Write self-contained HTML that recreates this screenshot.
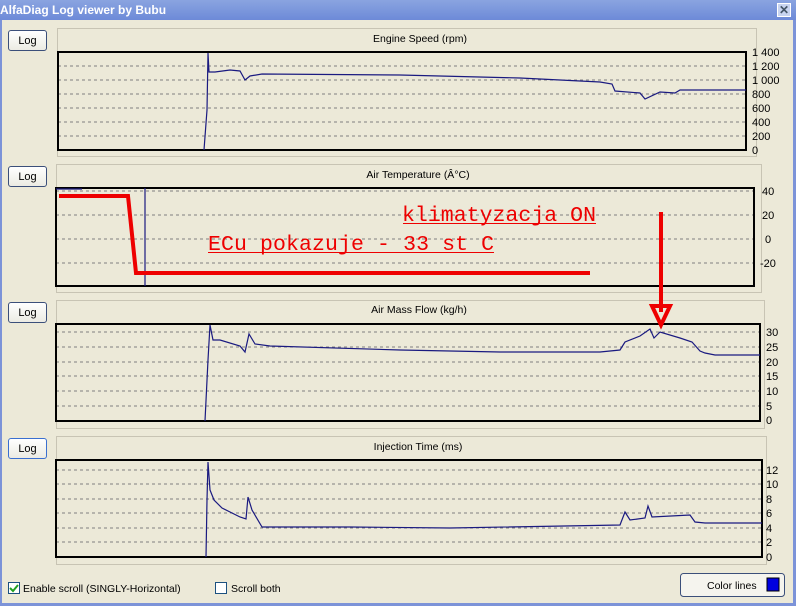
<!DOCTYPE html><html><head><meta charset="utf-8"><style>
body{margin:0;width:796px;height:606px;background:#ece9d8;font-family:"Liberation Sans",sans-serif;overflow:hidden;position:relative}
.t{position:absolute;left:0;top:0;width:796px;height:20px;background:linear-gradient(#8aa4e0,#6d8ad8);color:#fff;font-weight:bold;font-size:12px;line-height:20px;}
.btn{position:absolute;left:8px;width:39px;height:21px;border:1px solid #3b4f7a;border-radius:3px;background:linear-gradient(#fff,#ecebe3);font-size:11px;text-align:center;line-height:21px;box-sizing:border-box}
svg{position:absolute;left:0;top:0}
</style></head><body>
<div class="t">AlfaDiag Log viewer by Bubu</div>
<div style="position:absolute;left:777px;top:3px;width:14px;height:14px;background:#c8d4f0;border:1px solid #fff;box-sizing:border-box;color:#456;font-size:12px;line-height:12px;text-align:center;font-weight:bold">✕</div>
<div style="position:absolute;left:0;top:20px;width:2px;height:586px;background:#7c93d8"></div>
<div style="position:absolute;right:0;top:20px;width:3px;height:586px;background:#7c93d8"></div>
<div style="position:absolute;left:0;bottom:0;width:796px;height:3px;background:#7c93d8"></div>
<div class="btn" style="top:30px">Log</div>
<div class="btn" style="top:166px">Log</div>
<div class="btn" style="top:302px">Log</div>
<div class="btn" style="top:438px;border-color:#3a6fd0">Log</div>
<svg width="796" height="606" font-family="Liberation Sans" font-size="10.5">
<g fill="none" stroke="#fff"><rect x="57.5" y="28.5" width="699" height="128" stroke="#c8c4b4"/><rect x="56.5" y="164.5" width="705" height="128" stroke="#c8c4b4"/><rect x="56.5" y="300.5" width="708" height="128" stroke="#c8c4b4"/><rect x="56.5" y="436.5" width="710" height="128" stroke="#c8c4b4"/></g>
<g text-anchor="middle" fill="#000"><text x="420" y="42">Engine Speed (rpm)</text><text x="418" y="178">Air Temperature (Â°C)</text><text x="419" y="313">Air Mass Flow (kg/h)</text><text x="418" y="450">Injection Time (ms)</text></g>
<g stroke="#808080" stroke-dasharray="3,3">
<path d="M58 66H746M58 80H746M58 94H746M58 108H746M58 122H746M58 136H746"/>
<path d="M56 191H754M56 215H754M56 239H754M56 263H754"/>
<path d="M56 332H760M56 347H760M56 362H760M56 376H760M56 391H760M56 406H760"/>
<path d="M56 470H762M56 484H762M56 499H762M56 513H762M56 528H762M56 542H762"/>
</g>
<g fill="none" stroke="#000" stroke-width="2">
<rect x="58" y="52" width="688" height="98"/><rect x="56" y="188" width="698" height="98"/><rect x="56" y="324" width="704" height="97"/><rect x="56" y="460" width="706" height="97"/>
</g>
<g fill="#000" font-size="11">
<text x="752" y="56">1 400</text><text x="752" y="70">1 200</text><text x="752" y="84">1 000</text><text x="752" y="98">800</text><text x="752" y="112">600</text><text x="752" y="126">400</text><text x="752" y="140">200</text><text x="752" y="154">0</text>
<text x="762" y="195">40</text><text x="762" y="219">20</text><text x="765" y="243">0</text><text x="760" y="267">-20</text>
<text x="766" y="336">30</text><text x="766" y="351">25</text><text x="766" y="366">20</text><text x="766" y="380">15</text><text x="766" y="395">10</text><text x="766" y="410">5</text><text x="766" y="424">0</text>
<text x="766" y="474">12</text><text x="766" y="488">10</text><text x="766" y="503">8</text><text x="766" y="517">6</text><text x="766" y="532">4</text><text x="766" y="546">2</text><text x="766" y="561">0</text>
</g>
<g fill="none" stroke="#1a1a80" stroke-width="1.2">
<polyline points="204,150 207,110 208,53 209,72 215,72 230,70 240,71 245,80 250,76 262,74 400,75 520,78 600,82 612,84 615,91 640,93 645,99 660,92 675,93 680,90 746,90"/>
<path d="M145,188V286"/><path d="M56,189H82"/>
<polyline points="205,421 208,360 210,325 213,340 220,340 240,346 245,352 249,334 255,344 270,346 400,350 500,352 600,352 620,350 625,342 640,336 650,329 654,338 660,332 680,338 692,342 700,351 705,353 715,355 760,355"/>
<polyline points="206,557 207,500 208,462 210,490 214,500 222,508 240,517 246,519 248,497 252,510 262,527 350,527 450,528 620,525 625,512 630,520 645,518 648,506 652,517 690,515 695,522 705,523 762,523"/>
</g>
<g fill="none" stroke="#e00" stroke-width="4">
<polyline points="59,196 128,196 136,273 590,273"/>
<path d="M661,212V312"/>
</g>
<polygon points="652,306 670,306 661,325" fill="none" stroke="#e00" stroke-width="4"/>
<g fill="#e00" font-family="Liberation Mono" font-size="21.5"><text x="402" y="221" textLength="194">klimatyzacja ON</text><text x="208" y="250" textLength="286">ECu pokazuje - 33 st C</text></g>
<path d="M403 223.5H596M208 252.5H494" stroke="#e00"/>
<rect x="8.5" y="582.5" width="11" height="11" fill="#fff" stroke="#1c5180"/><path d="M10 588l3 3 5-6" stroke="#21a121" stroke-width="2" fill="none"/>
<text x="23" y="592">Enable scroll (SINGLY-Horizontal)</text>
<rect x="215.5" y="582.5" width="11" height="11" fill="#fff" stroke="#1c5180"/><text x="231" y="592">Scroll both</text>
<rect x="680.5" y="573.5" width="104" height="23" rx="3" fill="#f5f4ee" stroke="#3b4f7a"/>
<text x="707" y="589">Color lines</text><rect x="767" y="578" width="12" height="13" fill="#0000e0" stroke="#000"/>
</svg>
</body></html>
